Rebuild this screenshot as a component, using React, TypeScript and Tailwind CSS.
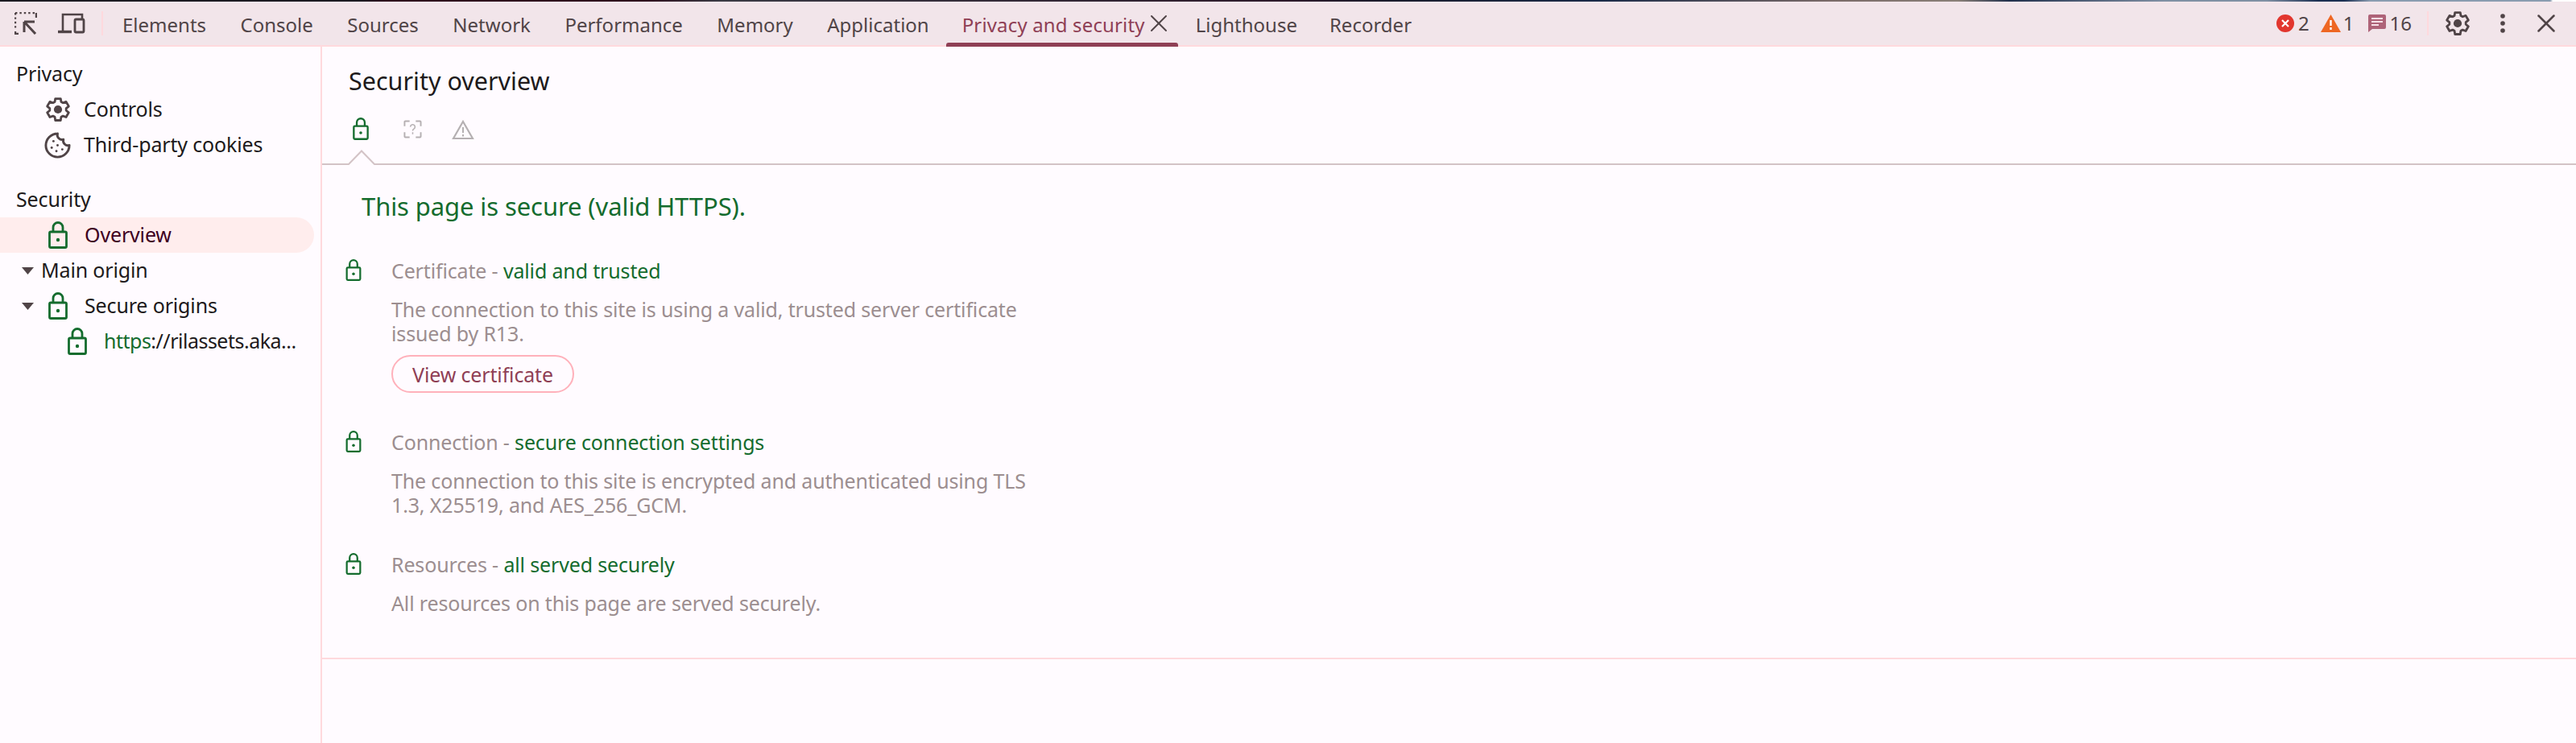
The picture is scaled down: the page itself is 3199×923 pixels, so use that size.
import { Cookie, X } from "lucide-react";

const tabs = ["Elements", "Console", "Sources", "Network", "Performance", "Memory", "Application"];

const LockIcon = ({ className }: { className: string }) => (
  <svg className={className} viewBox="0 0 24 34" fill="none">
    <path d="M6 13V7.5a6 6 0 0 1 12 0V13" stroke="#146c2e" strokeWidth="2.8" />
    <rect x="1.5" y="13" width="21" height="19.5" rx="1.6" stroke="#146c2e" strokeWidth="2.8" />
    <circle cx="12" cy="23" r="2.2" fill="#146c2e" />
  </svg>
);

const GearIcon = ({ className }: { className: string }) => (
  <svg className={className} viewBox="0 0 24 24" fill="none" stroke="#504447" strokeWidth="2" strokeLinejoin="round">
    <path d="M9.7 2.5h4.6l.5 2.8 1.6.9 2.7-1 2.3 4-2.2 1.8v1.9l2.2 1.8-2.3 4-2.7-1-1.6.9-.5 2.9H9.7l-.5-2.9-1.6-.9-2.7 1-2.3-4 2.2-1.8V11L2.6 9.2l2.3-4 2.7 1 1.6-.9z" />
    <circle cx="12" cy="12" r="3.6" fill="#504447" stroke="none" />
  </svg>
);

const Row = ({ indent, label, children }: { indent: string; label: React.ReactNode; children?: React.ReactNode }) => (
  <div className={`flex h-[44px] items-center ${indent}`}>
    {children}
    <span className="whitespace-nowrap">{label}</span>
  </div>
);

const Caret = () => (
  <svg className="ml-[27px] h-[9px] w-[15px]" viewBox="0 0 15 9">
    <path d="M0 0h15L7.5 9z" fill="#504447" />
  </svg>
);

const Section = ({
  title,
  status,
  children,
}: {
  title: string;
  status: string;
  children: React.ReactNode;
}) => (
  <div className="flex">
    <LockIcon className="ml-[29px] h-[27px] w-[20px] shrink-0" />
    <div className="ml-[37px] w-[810px]">
      <div className="flex h-[30px] items-center whitespace-pre text-[#9c8e90]">
        {title} - <span className="text-[#146c2e]">{status}</span>
      </div>
      <div className="mt-[17px] leading-[30px] text-[#9c8e90]">{children}</div>
    </div>
  </div>
);

export default function App() {
  return (
    <div className="flex h-[923px] w-[3199px] flex-col overflow-hidden bg-[#fffbff] font-['Noto_Sans',sans-serif] text-[25px] tracking-[-0.15px] text-[#201a1b]">
      {/* strip of the page above devtools */}
      <div className="h-[2px] shrink-0 bg-[linear-gradient(90deg,#1c1b22_0%,#1c1b22_14%,#2e0f1c_15%,#2e0f1c_25%,#3a3a44_28%,#2d1a2a_50%,#1a1c2c_54%,#1a2a48_62%,#7a6a68_71%,#8a8078_76%,#22304c_78%,#8090a4_84%,#8090a4_88%,#1b2f52_90%,#1b2f52_91%,#8a9cb0_92%,#8a9cb0_99%,#ffffff_99.1%)]" />

      {/* Toolbar */}
      <div className="flex h-[56px] shrink-0 items-center border-b-2 border-[#ffd9dd] bg-[#f2e5ea] text-[24px] tracking-normal text-[#504447]">
        <svg className="ml-[18px] h-[28px] w-[28px]" viewBox="0 0 28 28" fill="none">
          <path d="M1 1h26M1 1v20" stroke="#504447" strokeWidth="2.4" strokeDasharray="2.4 3" />
          <path d="M27 1v6" stroke="#504447" strokeWidth="2.4" />
          <path d="M1 24v3h4" stroke="#504447" strokeWidth="2.4" />
          <path d="M12 12h13M12 12v13M12.5 12.5 26 27" stroke="#504447" strokeWidth="3" />
        </svg>
        <svg className="ml-[26px] h-[26px] w-[34px]" viewBox="0 0 34 26" fill="none">
          <path d="M6 22V2h24v5" stroke="#504447" strokeWidth="2.6" />
          <path d="M0 23.5h17" stroke="#504447" strokeWidth="3.4" />
          <rect x="21" y="8" width="11" height="16" rx="1.5" stroke="#504447" strokeWidth="2.8" />
        </svg>
        <div className="ml-[20px] h-[30px] w-[2px] bg-[#ffd9dd]" />
        <div className="ml-[24px] flex gap-[42.5px] pt-[3px]">
          {tabs.map((tab) => (
            <span key={tab}>{tab}</span>
          ))}
        </div>
        <div className="relative ml-[21px] flex h-full items-center pl-[20px] pr-[6px]">
          <span className="pt-[3px] tracking-[0.15px] text-[#8f3f55]">Privacy and security</span>
          <X className="ml-[-1px] h-[36px] w-[36px]" strokeWidth={1.3} />
          <div className="absolute bottom-[-2px] left-0 right-0 h-[5px] rounded-t-[3px] bg-[#8f3f55]" />
        </div>
        <div className="ml-[22px] flex gap-[40px] pt-[3px]">
          <span>Lighthouse</span>
          <span>Recorder</span>
        </div>

        <div className="ml-auto flex items-center">
          <svg className="h-[22px] w-[22px]" viewBox="0 0 22 22">
            <circle cx="11" cy="11" r="11" fill="#e2362e" />
            <path d="M7 7l8 8M15 7l-8 8" stroke="#fff" strokeWidth="2.2" />
          </svg>
          <span className="ml-[5px]">2</span>
          <svg className="ml-[14px] h-[22px] w-[25px]" viewBox="0 0 25 22">
            <path d="M12.5 0 25 22H0z" fill="#ee6723" />
            <path d="M12.5 7v7M12.5 16v3" stroke="#fff" strokeWidth="2.4" />
          </svg>
          <span className="ml-[3px]">1</span>
          <svg className="ml-[17px] h-[22px] w-[22px]" viewBox="0 0 22 22">
            <path d="M2 0h18a2 2 0 0 1 2 2v14a2 2 0 0 1-2 2H5l-5 4V2a2 2 0 0 1 2-2z" fill="#ae6378" />
            <path d="M4 5h14M4 9h14M4 13h9" stroke="#f6dfe6" strokeWidth="1.8" />
          </svg>
          <span className="ml-[5px]">16</span>
          <div className="ml-[19px] h-[30px] w-[2px] bg-[#ffd9dd]" />
          <GearIcon className="ml-[19px] h-[34px] w-[34px]" />
          <svg className="ml-[36px] h-[24px] w-[6px]" viewBox="0 0 6 24">
            <circle cx="3" cy="3" r="2.8" fill="#504447" />
            <circle cx="3" cy="12" r="2.8" fill="#504447" />
            <circle cx="3" cy="21" r="2.8" fill="#504447" />
          </svg>
          <X className="ml-[32px] mr-[18px] h-[38px] w-[38px]" strokeWidth={1.6} />
        </div>
      </div>

      <div className="flex min-h-0 flex-1">
        {/* Sidebar */}
        <div className="w-[400px] shrink-0 border-r-2 border-[#ffd9dd] pt-[12px]">
          <div className="flex h-[44px] items-center pl-[20px]">Privacy</div>
          <Row indent="pl-[55px]" label="Controls">
            <GearIcon className="mr-[15px] h-[34px] w-[34px]" />
          </Row>
          <Row indent="pl-[54px]" label="Third-party cookies">
            <Cookie className="mr-[15px] h-[35px] w-[35px] text-[#504447]" strokeWidth={2} />
          </Row>
          <div className="mt-[24px] flex h-[44px] items-center pl-[20px]">Security</div>
          <div className="flex h-[44px] w-[390px] items-center rounded-r-full bg-[#ffeded] pl-[60px] text-[#3e0021]">
            <LockIcon className="mr-[21px] h-[34px] w-[24px]" />
            Overview
          </div>
          <Row indent="" label="Main origin">
            <Caret />
            <div className="w-[9px]" />
          </Row>
          <Row indent="" label="Secure origins">
            <Caret />
            <LockIcon className="ml-[18px] mr-[21px] h-[34px] w-[24px]" />
          </Row>
          <Row
            indent="pl-[84px] tracking-[-0.5px]"
            label={
              <>
                <span className="text-[#146c2e]">https</span>://rilassets.aka...
              </>
            }
          >
            <LockIcon className="mr-[21px] h-[34px] w-[24px]" />
          </Row>
        </div>

        {/* Main panel */}
        <div className="min-w-0 flex-1">
          <div className="flex h-[88px] items-center pb-[2px] pl-[33px] text-[30.5px] tracking-normal">Security overview</div>
          <div className="relative flex h-[59px] items-start border-b-2 border-[#d3c3c6] pl-[38px]">
            <LockIcon className="h-[28px] w-[20px]" />
            <svg className="ml-[43px] mt-[3px] h-[23px] w-[23px]" viewBox="0 0 24 24" fill="none" stroke="#b5b0b2" strokeWidth="2">
              <path d="M8 1.5H2.5a1 1 0 0 0-1 1V8M16 1.5h5.5a1 1 0 0 1 1 1V8M8 22.5H2.5a1 1 0 0 1-1-1V16M16 22.5h5.5a1 1 0 0 0 1-1V16" />
              <path d="M9 9a3 3 0 1 1 4.5 2.6c-1 .6-1.5 1-1.5 2.4M12 16v2.5" strokeWidth="1.6" />
            </svg>
            <svg className="ml-[37px] mt-[3px] h-[24px] w-[28px]" viewBox="0 0 28 24" fill="none" stroke="#b5b0b2" strokeWidth="2.2">
              <path d="M14 2 26 23H2z" />
              <path d="M14 9v7M14 18v2.5" strokeWidth="2" />
            </svg>
            <svg className="absolute bottom-[-2px] left-[32px] h-[19px] w-[34px]" viewBox="0 0 34 19" fill="none">
              <path d="M0 18h1L17 1.5 33 18h1v1H0z" fill="#fffbff" />
              <path d="M0 18h1L17 1.5 33 18h1" stroke="#d3c3c6" strokeWidth="2" />
            </svg>
          </div>

          <div className="border-b-2 border-[#ffd9dd] pb-[53px]">
            <div className="mb-[15px] flex h-[102px] items-center pl-[49px] text-[31px] tracking-[-0.1px] text-[#146c2e]">
              This page is secure (valid HTTPS).
            </div>
            <Section title="Certificate" status="valid and trusted">
              The connection to this site is using a valid, trusted server certificate issued by R13.
              <div className="mt-[12px] flex h-[47px] w-[227px] items-center justify-center rounded-full border-2 border-[#ffb1bb] text-[#8f3f55]">
                View certificate
              </div>
            </Section>
            <div className="mb-[45px] mt-[47px]">
              <Section title="Connection" status="secure connection settings">
                The connection to this site is encrypted and authenticated using TLS 1.3, X25519, and AES_256_GCM.
              </Section>
            </div>
            <Section title="Resources" status="all served securely">
              All resources on this page are served securely.
            </Section>
          </div>
        </div>
      </div>
    </div>
  );
}
